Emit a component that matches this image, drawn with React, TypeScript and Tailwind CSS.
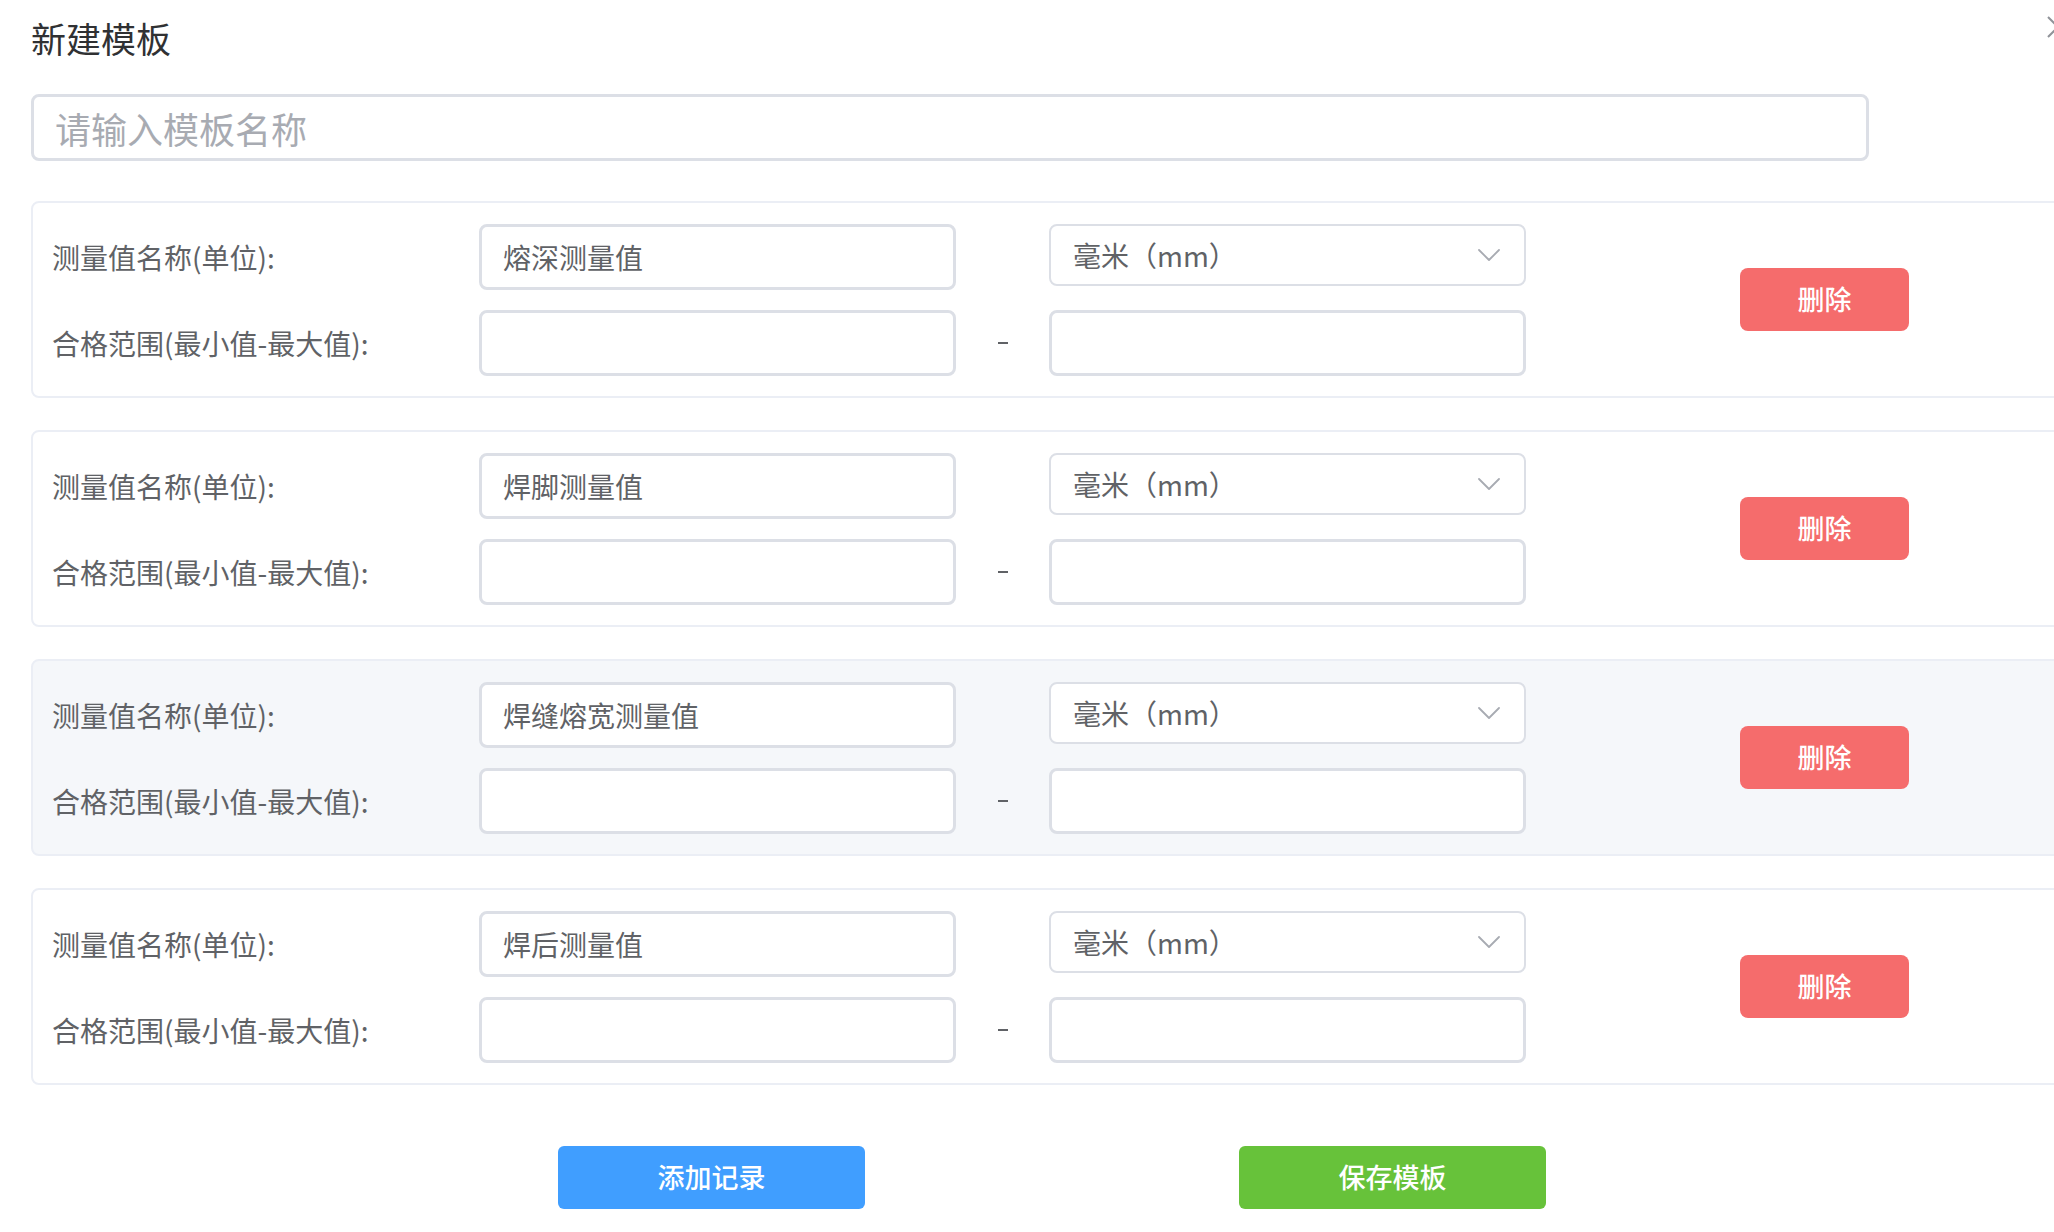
import { clsx } from "clsx"

// Measurement rows shown in the template editor
const records = [
  { name: "熔深测量值", active: false },
  { name: "焊脚测量值", active: false },
  { name: "焊缝熔宽测量值", active: true },
  { name: "焊后测量值", active: false },
]

const inputCls =
  "h-[66px] w-[477px] rounded-lg border-[3px] border-[#dcdfe6] bg-white px-[21px] text-[28px] text-[#606266] outline-none"

function ChevronDown() {
  return (
    <svg width="22" height="12" viewBox="0 0 22 12" fill="none">
      <path d="M1 1l10 10L21 1" stroke="#a8abb2" strokeWidth="1.8" strokeLinecap="round" strokeLinejoin="round" />
    </svg>
  )
}

function RecordCard({ name, active }: { name: string; active: boolean }) {
  return (
    <div
      className={clsx(
        "flex h-[197px] w-[2080px] shrink-0 items-center rounded-lg border-2 border-[#ebeef5] pl-[19px]",
        active ? "bg-[#f5f7fa]" : "bg-white"
      )}
    >
      <div className="flex flex-col gap-[20px]">
        {/* Name + unit */}
        <div className="flex h-[66px] items-start">
          <div className="flex h-[66px] w-[427px] items-center text-[28px] text-[#606266]">测量值名称(单位):</div>
          <input className={inputCls} defaultValue={name} />
          <div className="w-[93px]" />
          <div className="flex h-[62px] w-[477px] items-center justify-between rounded-lg border-2 border-[#dcdfe6] bg-white pl-[22px] pr-[24px]">
            <span className="text-[28px] text-[#606266]">毫米（mm）</span>
            <ChevronDown />
          </div>
        </div>

        {/* Qualified range */}
        <div className="flex h-[66px] items-center">
          <div className="w-[427px] text-[28px] text-[#606266]">合格范围(最小值-最大值):</div>
          <input className={inputCls} />
          <div className="flex w-[93px] justify-center">
            <span className="block h-[2px] w-[10px] bg-[#606266]" />
          </div>
          <input className={inputCls} />
        </div>
      </div>

      <button className="ml-[214px] h-[63px] w-[169px] rounded-lg bg-[#f56c6c] text-[27px] font-medium text-white">
        删除
      </button>
    </div>
  )
}

export default function App() {
  return (
    <div className="relative h-[1232px] w-[2054px] overflow-hidden bg-white px-[31px] font-['Noto_Sans_CJK_SC','Noto_Sans',sans-serif]">
      {/* Close icon, cut by the right edge */}
      <svg className="absolute left-[2047px] top-[16px]" width="22" height="22" viewBox="0 0 22 22" fill="none">
        <path d="M1 1l20 20M21 1L1 21" stroke="#909399" strokeWidth="2" />
      </svg>

      {/* Header */}
      <div className="flex h-[74px] items-center">
        <h1 className="text-[35px] leading-none text-[#303133]">新建模板</h1>
      </div>

      <input
        className="mt-[20px] h-[67px] w-[1838px] rounded-lg border-[3px] border-[#dcdfe6] px-[21px] text-[36px] text-[#606266] outline-none placeholder:text-[#a8abb2]"
        placeholder="请输入模板名称"
      />

      {/* Records */}
      <div className="mt-[40px] flex flex-col gap-[32px]">
        {records.map((r) => (
          <RecordCard key={r.name} name={r.name} active={r.active} />
        ))}
      </div>

      {/* Actions */}
      <div className="ml-[527px] mt-[61px] flex gap-[374px]">
        <button className="h-[63px] w-[307px] rounded-md bg-[#409eff] text-[27px] font-medium text-white">添加记录</button>
        <button className="h-[63px] w-[307px] rounded-md bg-[#67c23a] text-[27px] font-medium text-white">保存模板</button>
      </div>
    </div>
  )
}
